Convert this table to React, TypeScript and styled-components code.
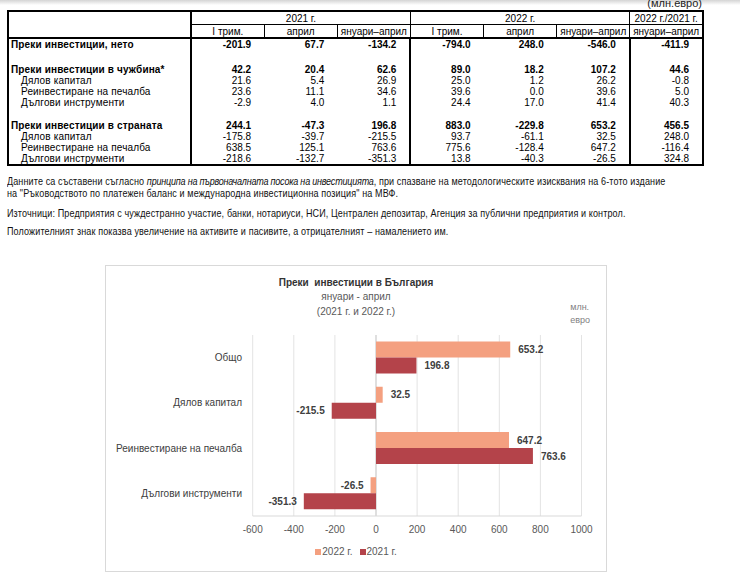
import React from "react";
import styled, { createGlobalStyle } from "styled-components";

const GlobalStyle = createGlobalStyle`
  html, body { margin: 0; padding: 0; }
  body {
    width: 740px;
    height: 583px;
    overflow: hidden;
    font-family: "Liberation Sans", Arial, sans-serif;
    color: #000;
    background: #fff linear-gradient(#d4d4d4, #fff 5px) no-repeat;
  }
`;

const Page = styled.div`
  display: flex;
  flex-direction: column;
`;

const Sheet = styled.div`
  width: 697px;
  margin-left: 7px;
`;

const Unit = styled.div`
  height: 12px;
  margin-top: -2px;
  padding-right: 2px;
  font-size: 11px;
  line-height: 10px;
  text-align: right;
  color: #222;
`;

const Table = styled.table`
  width: 697px;
  table-layout: fixed;
  border-collapse: collapse;
  border: 2px solid #000;
  font-size: 10px;
`;

const HeadCell = styled.th<{ $first?: boolean; $h: number }>`
  height: ${(p) => p.$h}px;
  padding: 0;
  font-weight: normal;
  line-height: 11px;
  text-align: center;
  white-space: nowrap;
  border: 1px solid #000;
  border-right-width: ${(p) => (p.$first ? 2 : 1)}px;
`;

const HeadRow = styled.tr<{ $last?: boolean }>`
  border-bottom: ${(p) => (p.$last ? "2px solid #000" : "none")};
`;

const Row = styled.tr<{ $h: number }>`
  height: ${(p) => p.$h}px;
`;

const Label = styled.td<{ $bold?: boolean }>`
  padding: 0 0 0 ${(p) => (p.$bold ? 2 : 12)}px;
  font-weight: ${(p) => (p.$bold ? "bold" : "normal")};
  line-height: 11px;
  white-space: nowrap;
  letter-spacing: 0.15px;
  border-right: 2px solid #000;
`;

const Num = styled.td<{ $bold?: boolean; $sep?: boolean }>`
  padding: 0 13px 0 0;
  font-weight: ${(p) => (p.$bold ? "bold" : "normal")};
  line-height: 11px;
  text-align: right;
  border-left: ${(p) => (p.$sep ? "2px solid #000" : "none")};
`;

// текстът под таблицата е в тесен шрифт (Arial Narrow) – свиваме Liberation Sans
const Notes = styled.div`
  margin: 9px 0 0 7px;
  width: 860px;
  font-size: 11px;
  line-height: 12px;
  letter-spacing: 0.15px;
  color: #111;
  white-space: nowrap;
  transform: scaleX(0.82);
  transform-origin: left top;
`;

const Note = styled.p<{ $gap: number }>`
  margin: 0 0 ${(p) => p.$gap}px;
`;

const Em = styled.i`
  letter-spacing: -0.25px;
`;

const ChartBox = styled.div`
  width: 500px;
  height: 295px;
  margin: 28px 0 0 105px;
  padding-top: 10px;
  box-sizing: content-box;
  border: 1px solid #d9d9d9;
  display: flex;
  flex-direction: column;
`;

const ChartHead = styled.div`
  display: grid;
  grid-template-columns: 1fr auto 1fr;
  height: 51px;
`;

const TitleBlock = styled.div`
  grid-column: 2;
  text-align: center;
  font-size: 10px;
  line-height: 14.3px;
  color: #595959;
`;

const Title = styled.div`
  font-weight: bold;
  color: #333;
`;

const ChartUnit = styled.div`
  grid-column: 3;
  justify-self: end;
  padding: 25px 16px 0 0;
  font-size: 9px;
  line-height: 13px;
  color: #7f7f7f;
`;

const Legend = styled.div`
  display: flex;
  justify-content: center;
  gap: 7px;
  margin-top: 4px;
  font-size: 10px;
  line-height: 12px;
  color: #595959;
`;

const LegendItem = styled.span`
  display: flex;
  align-items: center;
  gap: 1px;
`;

const Swatch = styled.i<{ $color: string }>`
  width: 6px;
  height: 6px;
  background: ${(p) => p.$color};
`;

const LIGHT = "#f4a080";
const DARK = "#b4434a";

type TableRow =
  | { spacer: number }
  | { label: string; bold?: boolean; values: number[] };

const rows: TableRow[] = [
  { label: "Преки инвестиции, нето", bold: true, values: [-201.9, 67.7, -134.2, -794.0, 248.0, -546.0, -411.9] },
  { spacer: 14 },
  { label: "Преки инвестиции в чужбина*", bold: true, values: [42.2, 20.4, 62.6, 89.0, 18.2, 107.2, 44.6] },
  { label: "Дялов капитал", values: [21.6, 5.4, 26.9, 25.0, 1.2, 26.2, -0.8] },
  { label: "Реинвестиране на печалба", values: [23.6, 11.1, 34.6, 39.6, 0.0, 39.6, 5.0] },
  { label: "Дългови инструменти", values: [-2.9, 4.0, 1.1, 24.4, 17.0, 41.4, 40.3] },
  { spacer: 12 },
  { label: "Преки инвестиции в страната", bold: true, values: [244.1, -47.3, 196.8, 883.0, -229.8, 653.2, 456.5] },
  { label: "Дялов капитал", values: [-175.8, -39.7, -215.5, 93.7, -61.1, 32.5, 248.0] },
  { label: "Реинвестиране на печалба", values: [638.5, 125.1, 763.6, 775.6, -128.4, 647.2, -116.4] },
  { label: "Дългови инструменти", values: [-218.6, -132.7, -351.3, 13.8, -40.3, -26.5, 324.8] },
];

const subHeads = ["I трим.", "април", "януари–април", "I трим.", "април", "януари–април", "януари–април"];

// първа колона на всяка група получава дебела лява граница
const isSep = (i: number) => i === 3 || i === 6;

const chartData = [
  { name: "Общо", y22: 653.2, y21: 196.8 },
  { name: "Дялов капитал", y22: 32.5, y21: -215.5 },
  { name: "Реинвестиране на печалба", y22: 647.2, y21: 763.6 },
  { name: "Дългови инструменти", y22: -26.5, y21: -351.3 },
];

const X0 = 270;
const K = 0.2055;
const TOP = 8;
const BAND = 45.25;
const BOTTOM = TOP + BAND * 4;
const ticks = [-600, -400, -200, 0, 200, 400, 600, 800, 1000];
const xOf = (v: number) => X0 + v * K;

const Bar = ({ v, y, color }: { v: number; y: number; color: string }) => {
  const x = Math.min(xOf(0), xOf(v));
  const pos = v >= 0;
  return (
    <g>
      <rect x={x} y={y} width={Math.abs(v) * K} height={16} fill={color} />
      <text
        x={pos ? xOf(v) + 8 : xOf(v) - 7}
        y={y + 11.5}
        textAnchor={pos ? "start" : "end"}
        fontSize="10"
        fontWeight="bold"
        fill="#404040"
      >
        {v.toFixed(1)}
      </text>
    </g>
  );
};

const Plot = () => (
  <svg width="500" height="215" fontFamily="Liberation Sans, Arial, sans-serif">
    {ticks.map((t) => (
      <g key={t}>
        <line
          x1={xOf(t)}
          x2={xOf(t)}
          y1={TOP}
          y2={BOTTOM}
          stroke={t === 0 ? "#bfbfbf" : "#e3e3e3"}
          strokeWidth="1"
        />
        <text x={xOf(t)} y={205.5} textAnchor="middle" fontSize="10" fill="#595959">
          {t}
        </text>
      </g>
    ))}
    <line x1={xOf(-600)} x2={xOf(1000)} y1={BOTTOM} y2={BOTTOM} stroke="#d9d9d9" />
    {chartData.map((c, i) => {
      const y = TOP + i * BAND + 6.5;
      return (
        <g key={c.name}>
          <text x={136} y={TOP + i * BAND + BAND / 2 + 3.5} textAnchor="end" fontSize="10" fill="#404040">
            {c.name}
          </text>
          <Bar v={c.y22} y={y} color={LIGHT} />
          <Bar v={c.y21} y={y + 16} color={DARK} />
        </g>
      );
    })}
  </svg>
);

export default function App() {
  return (
    <Page>
      <GlobalStyle />
      <Sheet>
        <Unit>(млн.евро)</Unit>
        <Table>
          <colgroup>
            <col style={{ width: 183 }} />
            {subHeads.map((_, i) => (
              <col key={i} />
            ))}
          </colgroup>
          <thead>
            <HeadRow>
              <HeadCell $first $h={12} rowSpan={2} />
              <HeadCell $h={12} colSpan={3}>2021 г.</HeadCell>
              <HeadCell $h={12} colSpan={3}>2022 г.</HeadCell>
              <HeadCell $h={12}>2022 г./2021 г.</HeadCell>
            </HeadRow>
            <HeadRow $last>
              {subHeads.map((h, i) => (
                <HeadCell key={i} $h={12}>
                  {h}
                </HeadCell>
              ))}
            </HeadRow>
          </thead>
          <tbody>
            {rows.map((r, idx) =>
              "spacer" in r ? (
                <Row key={idx} $h={r.spacer}>
                  <Label />
                  {subHeads.map((_, i) => (
                    <Num key={i} $sep={isSep(i)} />
                  ))}
                </Row>
              ) : (
                <Row key={idx} $h={11}>
                  <Label $bold={r.bold}>{r.label}</Label>
                  {r.values.map((v, i) => (
                    <Num key={i} $bold={r.bold} $sep={isSep(i)}>
                      {v.toFixed(1)}
                    </Num>
                  ))}
                </Row>
              )
            )}
          </tbody>
        </Table>
      </Sheet>

      <Notes>
        <Note $gap={8}>
          Данните са съставени съгласно <Em>принципа на първоначалната посока на инвестицията</Em>, при спазване на
          методологическите изисквания на 6-тото издание
          <br />
          на "Ръководството по платежен баланс и международна инвестиционна позиция" на МВФ.
        </Note>
        <Note $gap={6}>
          Източници: Предприятия с чуждестранно участие, банки, нотариуси, НСИ, Централен депозитар, Агенция за
          публични предприятия и контрол.
        </Note>
        <Note $gap={0}>
          Положителният знак показва увеличение на активите и пасивите, а отрицателният – намалението им.
        </Note>
      </Notes>

      <ChartBox>
        <ChartHead>
          <TitleBlock>
            <Title>Преки&nbsp; инвестиции в България</Title>
            <div>януари - април</div>
            <div>(2021 г. и 2022 г.)</div>
          </TitleBlock>
          <ChartUnit>
            млн.
            <br />
            евро
          </ChartUnit>
        </ChartHead>
        <Plot />
        <Legend>
          <LegendItem>
            <Swatch $color={LIGHT} />
            2022 г.
          </LegendItem>
          <LegendItem>
            <Swatch $color={DARK} />
            2021 г.
          </LegendItem>
        </Legend>
      </ChartBox>
    </Page>
  );
}
